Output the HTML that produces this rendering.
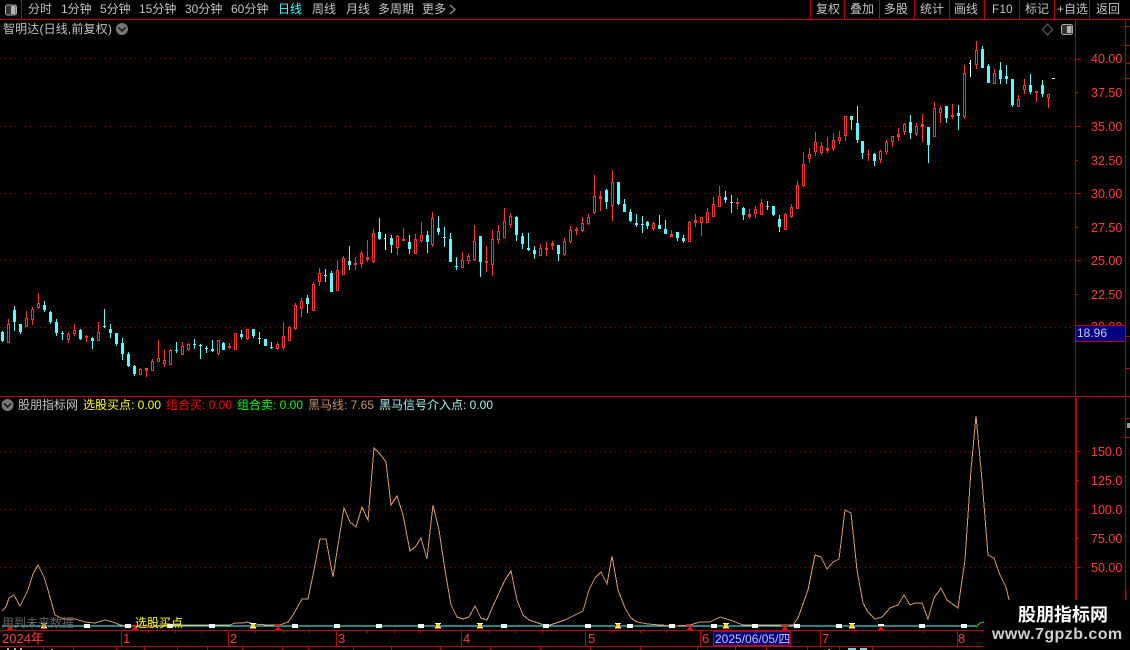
<!DOCTYPE html>
<html><head><meta charset="utf-8"><style>
html,body{margin:0;padding:0;background:#000;width:1130px;height:650px;overflow:hidden}
#r{position:relative;width:1130px;height:650px;overflow:hidden;background:#000;font:12px/14px "Liberation Sans","WenQuanYi Zen Hei","Noto Sans CJK SC",sans-serif;color:#c4c4c4}
#r span{position:absolute;white-space:nowrap}
svg{position:absolute;left:0;top:0}
.a{color:#ff3c3c;font-size:12.5px;left:1091px}
.b{color:#ff3c3c;font-size:13px;top:632px}
</style></head><body><div id="r">
<svg id="s" width="1130" height="650" viewBox="0 0 1130 650">
<g stroke="#c00000" stroke-width="1" shape-rendering="crispEdges" fill="none">
<path d="M0 19.5H1130M21.5 0V19M810.5 0V19M844.5 0V19M879.5 0V19M914.5 0V19M949.5 0V19M984.5 0V19M1019.5 0V19M1054.5 0V19M1089.5 0V19"/>
<path d="M1075.5 19V396M1125.5 19V396M1125.5 398V600M0 396.5H1130"/>
<path d="M0 630.5H984M0 646.5H984M121.5 630V646M228.5 630V646M336.5 630V646M461.5 630V646M585.5 630V646M700.5 630V646M820.5 630V646M957.5 630V646"/>
<path d="M148.5 630V633M175.5 630V633M201.5 630V633M255.5 630V633M283.5 630V633M309.5 630V633M367.5 630V633M394.5 630V633M420.5 630V633M488.5 630V633M515.5 630V633M542.5 630V633M612.5 630V633M640.5 630V633M666.5 630V633M854.5 630V633M889.5 630V633M923.5 630V633M982.5 630V633"/>
<path d="M43.5 646V650M73.5 646V650M116.5 646V650M144.5 646V650M177.5 646V650M207.5 646V650M242.5 646V650M282.5 646V650M308.5 646V650M353.5 646V650M391.5 646V650M440.5 646V650M490.5 646V650M540.5 646V650M590.5 646V650M640.5 646V650M697.5 646V650M735.5 646V650M766.5 646V650M807.5 646V650M839.5 646V650M872.5 646V650"/>
<path d="M1076 59.5H1081M1076 92.5H1078M1076 126.5H1081M1076 160.5H1078M1076 193.5H1081M1076 227.5H1078M1076 260.5H1081M1076 294.5H1078M1126 26.5H1130M1126 45.5H1130M1126 63.5H1130M1126 78.5H1130M1126 336.5H1130M1126 368.5H1130M1126 418.5H1130M1126 437.5H1130"/>
<path d="M1077 451.5H1081M1077 480.5H1079M1077 509.5H1081M1077 538.5H1079M1077 567.5H1081"/>
</g>
<rect x="1075" y="398" width="2" height="202" fill="#c00000"/>
<g stroke="#8c0000" stroke-dasharray="1 4" shape-rendering="crispEdges">
<path d="M0 58.5H1075M0 126.5H1075M0 193.5H1075M0 260.5H1075M0 327.5H1075M0 451.5H1075M0 509.5H1075M0 567.5H1075"/>
</g>
<g id="c" shape-rendering="crispEdges"></g>
<path d="M2 626H976" stroke="#6ff" stroke-width="1" shape-rendering="crispEdges"/>
<path d="M976 627L980 623L984 622" stroke="#2fd02f" fill="none"/>
<polyline fill="none" stroke="#d89c6c" stroke-width="1" shape-rendering="crispEdges" points="2,611 6,607 9,598 14,595 20,606 28,590 33,574 38,565 44,577 48,590 55,615 61,618 67,619 75,619 85,622 95,623 105,620 113,622 120,625 128,626 150,626 173,625 230,625 235,623 243,623 247,622 253,624 268,625 280,625 288,622 293,615 302,599 308,599 314,570 320,539 326,539 333,577 338,545 344,508 350,522 356,527 362,507 368,520 374,448 380,454 386,462 391,505 397,496 403,515 410,551 416,546 421,538 427,559 433,505 439,530 445,570 451,605 457,617 463,619 469,617 475,606 481,618 487,620 493,606 499,593 505,580 511,571 517,600 523,615 529,620 535,622 541,624 547,626 553,624 559,622 565,620 571,617 577,614 583,611 589,590 595,578 601,572 607,584 612,556 618,590 625,608 631,618 637,622 648,624 660,625 675,626 690,625 700,622 710,622 720,617 730,620 738,623 743,625 770,625 793,625 798,618 803,604 808,590 815,555 821,557 827,569 833,562 839,559 845,510 851,513 857,570 863,603 868,612 875,619 882,617 890,608 898,605 904,595 910,605 915,603 922,603 928,619 934,598 941,588 947,600 958,608 965,560 971,470 976,416 982,480 988,555 994,558 1000,575 1006,587 1009,600"/>
<g id="m" shape-rendering="crispEdges"></g>
<rect x="984" y="600" width="146" height="50" fill="#000"/>
<path d="M1076 590V600M1126 590V600" stroke="#c00000" shape-rendering="crispEdges"/>
<rect x="713.5" y="631.5" width="77" height="14" fill="#000080" stroke="#c00000" shape-rendering="crispEdges"/>
<rect x="1075.5" y="325.5" width="50" height="16" fill="#000080" stroke="#c00000" shape-rendering="crispEdges"/>
<rect x="5.5" y="5" width="11" height="10" rx="2" fill="#333" stroke="#aaa"/><rect x="11" y="6" width="4.5" height="8" fill="#b4b4b4"/>
<rect x="1061.5" y="24.500" width="11" height="10" rx="2" fill="#333" stroke="#aaa"/><rect x="1067" y="26" width="4.500" height="7" fill="#b4b4b4"/>
<path d="M1047.5 24L1052.5 29.500L1047.5 35L1042.500 29.500Z" fill="none" stroke="#666"/>
<circle cx="122" cy="29" r="6" fill="#777"/><path d="M118.500 27.500L122 31L125.500 27.500" fill="none" stroke="#111" stroke-width="1.500"/>
<circle cx="7.500" cy="405" r="6" fill="#777"/><path d="M4 403.500L7.500 407L11 403.500" fill="none" stroke="#111" stroke-width="1.500"/>
<path d="M450 5L455 9.500L450 14" fill="none" stroke="#bbb"/>
</svg>
<span style="left:28px;top:2px">分时</span><span style="left:61px;top:2px">1分钟</span><span style="left:100px;top:2px">5分钟</span><span style="left:139px;top:2px">15分钟</span><span style="left:185px;top:2px">30分钟</span><span style="left:231px;top:2px">60分钟</span><span style="left:278px;top:2px;color:#4ff">日线</span><span style="left:312px;top:2px">周线</span><span style="left:346px;top:2px">月线</span><span style="left:378px;top:2px">多周期</span><span style="left:422px;top:2px">更多</span>
<span style="left:816px;top:2px">复权</span><span style="left:850px;top:2px">叠加</span><span style="left:884px;top:2px">多股</span><span style="left:920px;top:2px">统计</span><span style="left:954px;top:2px">画线</span><span style="left:992px;top:2px">F10</span><span style="left:1025px;top:2px">标记</span><span style="left:1057px;top:2px">+自选</span><span style="left:1096px;top:2px">返回</span>
<span style="left:3px;top:22px;letter-spacing:.15px">智明达(日线,前复权)</span>
<span class="a" style="top:52px">40.00</span><span class="a" style="top:86px">37.50</span><span class="a" style="top:120px">35.00</span><span class="a" style="top:154px">32.50</span><span class="a" style="top:187px">30.00</span><span class="a" style="top:221px">27.50</span><span class="a" style="top:254px">25.00</span><span class="a" style="top:288px">22.50</span>
<span class="a" style="top:320px;clip-path:inset(0 0 9px 0)">20.00</span>
<span style="left:1077px;top:326px;color:#c8c8e6;font-size:12px">18.96</span>
<span class="a" style="top:445px">150.0</span><span class="a" style="top:474px">125.0</span><span class="a" style="top:503px">100.0</span><span class="a" style="top:532px">75.00</span><span class="a" style="top:561px">50.00</span>
<span style="left:18px;top:398px">股朋指标网</span>
<span style="left:83px;top:398px;color:#ff0">选股买点: 0.00</span>
<span style="left:166px;top:398px;color:#f00">组合买: 0.00</span>
<span style="left:237px;top:398px;color:#0f0">组合卖: 0.00</span>
<span style="left:308px;top:398px;color:#c89468">黑马线: 7.65</span>
<span style="left:379px;top:398px;color:#a6f2f2">黑马信号介入点: 0.00</span>
<span style="left:2px;top:616px;color:#666">用到未来数据</span>
<span style="left:135px;top:616px;color:#ff0">选股买点</span>
<span class="b" style="left:2px">2024年</span><span class="b" style="left:123px">1</span><span class="b" style="left:230px">2</span><span class="b" style="left:338px">3</span><span class="b" style="left:463px">4</span><span class="b" style="left:588px">5</span><span class="b" style="left:702px">6</span><span style="left:715px;top:632px;color:#c8c8e6;font-size:12px">2025/06/05/四</span><span class="b" style="left:822px">7</span><span class="b" style="left:958px">8</span>
<span style="left:1018px;top:603px;color:#fff;font-size:18px;line-height:22px;font-weight:bold;font-family:'Noto Sans CJK SC',sans-serif">股朋指标网</span>
<span style="left:992px;top:625px;color:#d0d0d0;font-size:16px;line-height:20px;font-weight:bold;letter-spacing:.45px">www.7gpzb.com</span>
</div>
<script>
var A=[['c',153,155,184,187],['r',118,133,188,189],['c',78,90,126,153],['c',132,132,157,162],['r',94,115,141,142],['r',82,87,120,135],['r',39,69,84,87],['c',64,75,91,96],['c',93,96,126,132],['c',117,126,159,168],['c',153,159,163,180],['r',156,163,180,189],['r',132,151,162,168],['c',147,150,177,180],['r',165,169,174,186],['c',171,174,183,207],['r',126,157,182,183],['c',87,138,142,144],['c',132,147,159,174],['c',159,159,192,198],['c',174,189,222,240],['c',216,222,258,261],['c',255,258,282,288],['r',264,267,285,285],['r',264,265,272,291],['r',237,243,273,273],['r',180,235,245,246],['r',210,241,251,261],['r',207,210,254,255],['c',186,210,214,219],['r',186,198,225,225],['r',189,192,210,213],['c',177,192,195,207],['c',192,195,198,237],['c',198,204,207,219],['c',180,207,213,216],['r',180,181,222,225],['c',186,189,210,210],['r',189,198,204,207],['r',159,160,209,210],['c',150,162,171,177],['r',147,148,177,180],['c',147,147,168,174],['c',156,174,177,192],['c',177,177,198,198],['c',186,202,204,207],['r',186,192,207,210],['r',126,168,204,210],['r',138,141,182,183],['r',69,75,147,150]];
A=A.map(function(a){return [a[0],280+a[1]/3,280+a[2]/3,280+a[3]/3,280+a[4]/3]});
var B=[['r',298,301,309,317],['c',295,298,304,313],['r',282,284,311,311],['r',268,273,282,286],['c',269,275,276,282],['c',271,273,292,292],['r',260,270,291,291],['r',256,258,275,275],['c',246,261,265,270],['r',257,263,265,270],['r',251,253,264,268],['r',240,257,260,262],['r',229,233,262,263],['c',218,232,239,240],['w',234,238,239,250],['c',235,238,245,253],['r',235,236,248,255],['r',228,239,241,241],['c',235,242,249,254],['r',234,239,254,254],['r',222,235,241,243],['c',231,235,242,253],['r',212,218,245,247],['c',216,228,232,235],['c',227,237,238,247],['c',233,239,262,262],['c',257,266,267,270],['r',252,260,268,268],['r',254,256,261,264],['r',225,241,260,261],['c',236,236,262,277],['r',246,261,263,272],['r',230,239,265,276],['r',225,231,240,244],['r',208,221,238,238],['r',213,216,225,228],['c',216,217,235,241],['c',233,236,244,249],['c',233,248,250,251],['c',246,250,254,259],['r',244,248,256,256],['r',242,248,250,256],['r',241,243,246,250],['c',245,245,254,261],['r',238,241,255,256],['r',226,230,242,243],['r',227,229,231,235],['r',217,223,231,232],['r',214,217,224,225],['r',175,196,213,214],['r',191,196,199,211],['c',189,190,202,209],['r',170,182,206,221],['c',182,182,204,205],['c',199,204,212,212],['c',209,212,221,222],['c',214,223,225,227],['c',216,224,225,233],['c',221,222,226,229],['r',222,223,229,231],['c',215,225,229,229],['c',220,229,234,234],['r',230,234,237,237],['c',232,232,238,241],['c',235,238,241,243],['r',221,222,242,242],['r',214,220,223,227],['r',217,217,223,236],['r',208,212,223,223],['r',197,204,217,217],['r',186,196,207,207],['c',191,197,200,203],['c',195,202,203,213],['r',198,202,204,209],['c',207,208,215,220],['r',209,214,217,219],['r',206,209,214,218],['r',199,203,215,215],['c',201,206,207,210],['c',206,206,215,216],['c',215,219,227,232],['r',213,214,230,230],['r',204,207,217,218],['r',181,185,209,209],['r',152,164,186,187],['r',148,154,159,163],['r',132,142,152,156],['r',142,146,153,155],['r',137,148,151,153],['r',133,140,149,151],['r',131,137,141,144],['r',116,116,136,141],['c',116,116,120,130],['c',106,123,140,143],['c',141,141,153,159],['r',150,154,155,161],['c',153,154,161,166],['r',150,151,160,163],['r',140,142,152,155],['r',136,136,142,147],['r',128,134,137,141],['r',123,124,132,135],['c',115,122,133,139],['r',123,126,134,136],['r',114,124,127,142],['c',127,127,145,163],['r',102,108,137,137],['r',106,108,113,123],['c',106,106,118,123],['r',104,115,117,119],['c',105,113,116,130],['r',65,73,117,119],['w',60,63,64,77],['r',41,50,65,69],['c',46,49,68,68],['c',64,66,83,83],['r',69,73,84,84],['c',62,70,79,84],['c',65,76,79,84],['c',79,79,105,107],['r',95,99,107,107],['r',79,85,90,94],['c',74,85,92,94],['r',91,91,93,102],['c',80,85,94,97],['r',94,94,98,108]];
var D=A.concat(B),h='',col={r:'#ff3232',c:'#55ffff',w:'#ffffff'};
function R(x,y,w,h2,f){return '<rect x="'+x+'" y="'+y+'" width="'+w+'" height="'+h2+'" fill="'+f+'"/>';}
D.forEach(function(d,i){
 var dr=i>=144?4:i>=108?3:i>=72?2:i>=37?1:0,x=2+6*i-dr,f=col[d[0]];
 var hi=Math.round(d[1]),t=Math.round(d[2]),b=Math.round(d[3]),lo=Math.round(d[4]);
 if(b-t<1)b=t+1;
 h+=R(x,hi,1,Math.max(lo-hi,1),f);
 if(d[0]=='w'){h+=R(x-1,t,2,1,f);return;}
 h+=R(x-1,t,3,b-t,f);
 if(d[0]=='r'&&b-t>3)h+=R(x,t+1,1,b-t-2,'#000');
});
h+=R(1052,78,3,1,'#fff');
document.getElementById('c').innerHTML=h;
var m='';
[87,128,170,212,295,337,379,421,504,546,588,630,672,714,755,797,839,922,964].forEach(function(x){m+=R(x-3,624,6,4,'#f4ffff')});
[44,253,438,480,618,726,852].forEach(function(x){m+=R(x-3,623,6,1,'#fff')+R(x-2,624,4,3,'#ffd800')+R(x-3,627,6,1,'#fff')+R(x-3,628,6,1,'#ff2020')});
[10,135,278,690,785,881].forEach(function(x){m+=R(x-4,625,8,1,'#d02020')+R(x-1,627,2,1,'#f00')+R(x-2,628,4,1,'#f00')+R(x-3,629,6,1,'#f00')});
m+=R(881-3,624,6,2,'#fff');
m+=R(7,648,2,2,'#aaa')+R(14,648,2,2,'#aaa')+R(20,648,2,2,'#aaa')+R(51,649,2,1,'#aaa')+R(828,649,2,1,'#aaa')+R(848,648,8,2,'#8cc')+R(860,648,7,2,'#8cc');
m+=R(1127,423,3,5,'#999');
document.getElementById('m').innerHTML=m;
</script>
</body></html>
